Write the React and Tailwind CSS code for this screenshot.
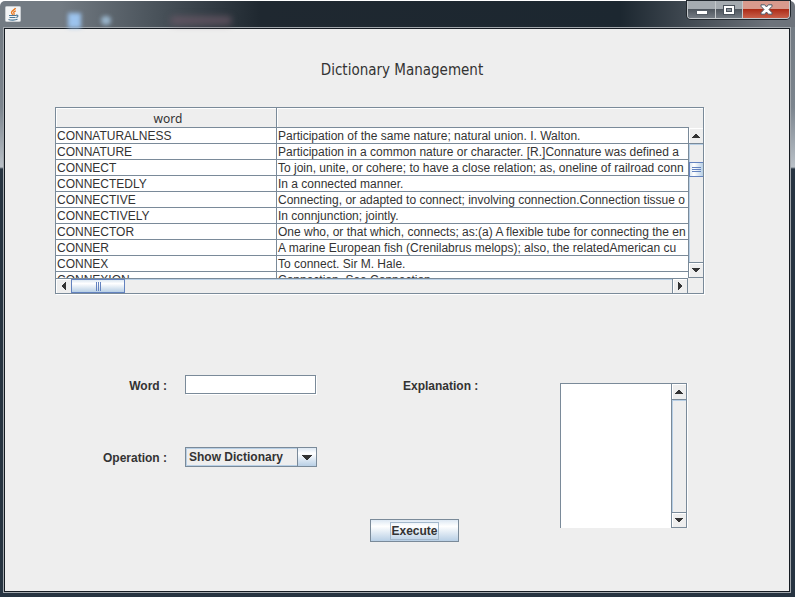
import React from "react";

const rows = [
  ["CONNATURALNESS", "Participation of the same nature; natural union. I. Walton."],
  ["CONNATURE", "Participation in a common nature or character. [R.]Connature was defined a"],
  ["CONNECT", "To join, unite, or cohere; to have a close relation; as, oneline of railroad conn"],
  ["CONNECTEDLY", "In a connected manner."],
  ["CONNECTIVE", "Connecting, or adapted to connect; involving connection.Connection tissue o"],
  ["CONNECTIVELY", "In connjunction; jointly."],
  ["CONNECTOR", "One who, or that which, connects; as:(a) A flexible tube for connecting the en"],
  ["CONNER", "A marine European fish (Crenilabrus melops); also, the relatedAmerican cu"],
  ["CONNEX", "To connect. Sir M. Hale."],
  ["CONNEXION", "Connection. See Connection."],
];

const arrows = {
  up: { w: 8, h: 4, d: "M3 0h2v1h1v1h1v1h1v1H0V3h1V2h1V1h1z" },
  down: { w: 8, h: 4, d: "M0 0h8v1H7v1H6v1H5v1H3V3H2V2H1V1H0z" },
  left: { w: 4, h: 8, d: "M4 0v8H3V7H2V6H1V5H0V3h1V2h1V1h1V0z" },
  right: { w: 4, h: 8, d: "M0 0v8h1V7h1V6h1V5h1V3H3V2H2V1H1V0z" },
};

function Arrow({ dir }) {
  const a = arrows[dir];
  return (
    <svg width={a.w} height={a.h} viewBox={`0 0 ${a.w} ${a.h}`} fill="#333" shapeRendering="crispEdges" aria-hidden="true">
      <path d={a.d} />
    </svg>
  );
}

function ScrollButton({ dir, className }) {
  return (
    <button
      type="button"
      aria-label={`Scroll ${dir}`}
      className={`flex shrink-0 items-center justify-center border-[#7a8a99] bg-[#eee] shadow-[inset_1px_1px_0_#fff] ${className}`}
    >
      <Arrow dir={dir} />
    </button>
  );
}

function JavaIcon() {
  return (
    <svg width="16" height="16" viewBox="0 0 16 16" fill="none" aria-hidden="true">
      <rect x="0.5" y="0.5" width="15" height="15" rx="1" fill="#f3f4f5" stroke="#c9cdd1" />
      <path d="M10.500 2C10 4 6.500 4.500 6.500 6.500c0 1 .8 1.500 1.300 2.300M10.800 4.800C9 5.500 8.200 6.300 9 7.300c.4.500.2 1-.2 1.500" stroke="#e8771f" strokeWidth="1.300" />
      <path d="M4 9.500h7M4.500 11.500h6M3.500 13.500c2 .8 7 .7 9-.2M11 9.300c2.500-.6 2.500 1.700.2 2.200" stroke="#4d7896" strokeWidth="1.200" />
    </svg>
  );
}

function TitleBar() {
  return (
    <header className="relative flex h-[26px] items-start justify-between pr-[5px] pl-[5px]">
      <div className="pt-[5px]">
        <JavaIcon />
      </div>
      <div aria-hidden="true" className="absolute top-[12px] left-[68px] h-[15px] w-[13px] bg-[#9cc3ee] blur-[2px]" />
      <div aria-hidden="true" className="absolute top-[15px] left-[101px] h-[9px] w-[10px] rounded-full bg-[#98b4cb] blur-[2px]" />
      <div aria-hidden="true" className="absolute top-[15px] left-[170px] h-[9px] w-[62px] rounded-full bg-[#6b5867]/70 blur-[3px]" />
      <div className="flex h-[18px] overflow-hidden rounded-b-[4px] border border-t-0 border-[#c4c8cb] shadow-[0_0_0_1px_#20262c]">
        <button type="button" aria-label="Minimize" className="flex w-[28px] items-center justify-center border-r border-[#c4c8cb] bg-linear-to-b from-[#a5abb0] from-45% via-[#50575f] via-50% to-[#747b83]">
          <svg width="12" height="5" viewBox="0 0 12 5" className="mt-[5px]" aria-hidden="true">
            <rect x="0.5" y="0.5" width="11" height="4" fill="#fff" stroke="#555d66" />
          </svg>
        </button>
        <button type="button" aria-label="Maximize" className="flex w-[27px] items-center justify-center border-r border-[#c4c8cb] bg-linear-to-b from-[#a5abb0] from-45% via-[#50575f] via-50% to-[#747b83]">
          <svg width="12" height="10" viewBox="0 0 12 10" fill="none" aria-hidden="true">
            <rect x="0.5" y="0.5" width="11" height="9" fill="#fff" stroke="#4a525b" />
            <rect x="3.5" y="3.5" width="5" height="3" fill="#8b9299" stroke="#4a525b" />
          </svg>
        </button>
        <button type="button" aria-label="Close" className="flex w-[46px] items-center justify-center bg-linear-to-b from-[#d99a8d] from-45% via-[#ad2c17] via-50% to-[#c95f49]">
          <svg width="13" height="11" viewBox="0 0 13 11" aria-hidden="true">
            <path d="M1 .8h3.700L6.500 3 8.300.8H12v1.500L9 5.500l3 3.200v1.500H8.300L6.500 8l-1.800 2.200H1V8.700l3-3.200-3-3.200z" fill="#fff" stroke="#4c5967" />
          </svg>
        </button>
      </div>
    </header>
  );
}

function DictionaryTable() {
  return (
    <section aria-label="Dictionary entries" className="border border-[#7a8a99] shadow-[1px_1px_0_#fff]">
      <div className="flex h-[170px]">
        <div id="entries" className="min-w-0 flex-1 overflow-hidden">
          <table className="w-[1600px] table-fixed border-separate border-spacing-0 text-left">
            <thead>
              <tr className="h-5 font-['Noto_Sans',sans-serif] text-xs">
                <th className="w-[221px] border-r border-b border-[#7a8a99] p-0 pt-[2px] pl-[4px] text-center leading-[17px] font-normal shadow-[inset_1px_1px_0_#fff]">word</th>
                <th aria-label="explanation" className="border-b border-[#7a8a99] p-0 shadow-[inset_1px_1px_0_#fff]" />
              </tr>
            </thead>
            <tbody>
              {rows.map(([word, text]) => (
                <tr key={word} className="h-4 bg-white">
                  <td className="border-r border-b border-[#7a8a99] p-0 pt-px pl-px leading-[14px]">{word}</td>
                  <td className="border-b border-[#7a8a99] p-0 pt-px pl-px leading-[14px] whitespace-nowrap">{text}</td>
                </tr>
              ))}
            </tbody>
          </table>
        </div>
        <div className="flex w-[14px] flex-col pt-5 shadow-[inset_0_1px_0_#fff]">
          <div className="-ml-px flex flex-1 flex-col border-l border-[#7a8a99] bg-[#eee]">
            <ScrollButton dir="up" className="h-4 border-b" />
            <div className="flex-1 pt-[18px] shadow-[inset_1px_1px_0_#b8cfe5]">
              <div role="scrollbar" aria-label="Vertical" aria-orientation="vertical" aria-controls="entries" aria-valuenow={15} className="flex h-[15px] flex-col items-center justify-center gap-px border border-r-0 border-[#6382bf] bg-linear-to-r from-[#dde8f3] via-white via-30% to-[#b8cfe5]">
                <span className="h-px w-[9px] bg-[#6382bf]" />
                <span className="h-px w-[9px] bg-[#6382bf]" />
                <span className="h-px w-[9px] bg-[#6382bf]" />
              </div>
            </div>
            <ScrollButton dir="down" className="h-4 border-y" />
          </div>
        </div>
      </div>
      <div className="flex h-[15px]">
        <div className="flex flex-1 border-t border-[#7a8a99]">
          <ScrollButton dir="left" className="w-[15px]" />
          <div className="flex-1 shadow-[inset_1px_1px_0_#b8cfe5]">
            <div role="scrollbar" aria-label="Horizontal" aria-orientation="horizontal" aria-controls="entries" aria-valuenow={0} className="flex h-full w-[54px] items-center justify-center gap-px border border-[#6382bf] bg-linear-to-b from-[#dde8f3] via-white via-30% to-[#b8cfe5]">
              <span className="h-[9px] w-px bg-[#6382bf]" />
              <span className="h-[9px] w-px bg-[#6382bf]" />
              <span className="h-[9px] w-px bg-[#6382bf]" />
            </div>
          </div>
          <ScrollButton dir="right" className="w-4 border-x" />
        </div>
        <div className="w-[15px]" />
      </div>
    </section>
  );
}

export default function App() {
  return (
    <div className="flex min-h-screen bg-white pt-px pr-[2px] pb-[2px] font-['Liberation_Sans',Arial,sans-serif] text-xs text-[#333]">
      <div className="flex min-w-0 flex-1 flex-col rounded-t-[5px] bg-[linear-gradient(to_right,#737b83_0,#737b83_60px,#4c555d_150px,#1f2830_260px,#1c2730_620px,#6d737b_770px)] bg-[length:100%_26px] bg-no-repeat">
        <TitleBar />
        <div className="flex flex-1 bg-[linear-gradient(to_bottom,#737b83_0,#7c858e_80px,#b9c0c7_140px,#273441_142px)] pr-1 pb-[4px] pl-[3px]">
          <main className="min-w-0 flex-1 border border-[#a3a8ad] bg-[#eee] shadow-[inset_0_0_0_1px_#151b22]">
            <div className="pt-[31px] pr-[86px] pl-[51px]">
              <h1 className="pb-[26px] pl-[45px] text-center font-['DejaVu_Sans_Condensed','Noto_Sans',sans-serif] text-[15px] leading-[22px]">Dictionary Management</h1>
              <DictionaryTable />
            </div>
            <form className="flex items-start pt-[81px] pr-[103px] pl-[99px]" onSubmit={(e) => e.preventDefault()}>
              <div className="grid grid-cols-[64px_132px] gap-x-[18px] gap-y-[50px] font-bold">
                <label htmlFor="word" className="text-right leading-[22px]">Word :</label>
                <input id="word" type="text" className="h-[19px] w-[131px] border border-[#7a8a99] bg-white px-1 font-normal shadow-[1px_1px_0_#fff] outline-none" />
                <label htmlFor="operation" className="text-right leading-[22px]">Operation :</label>
                <div className="grid h-5 grid-cols-[1fr_20px]">
                  <select id="operation" className="col-span-2 col-start-1 row-start-1 h-5 appearance-none border border-[#7a8a99] bg-[#eee] pl-[3px] leading-[16px] font-bold shadow-[inset_0_0_0_1px_#b8cfe5] outline-none">
                    <option>Show Dictionary</option>
                    <option>Add Word</option>
                    <option>Delete Word</option>
                  </select>
                  <span className="pointer-events-none col-start-2 row-start-1 flex items-center justify-center border border-[#7a8a99] bg-linear-to-b from-[#dde8f3] via-white via-30% to-[#b8cfe5]">
                    <svg width="10" height="5" viewBox="0 0 10 5" fill="#333" shapeRendering="crispEdges" aria-hidden="true">
                      <path d="M0 0h10v1H9v1H8v1H7v1H6v1H4V4H3V3H2V2H1V1H0z" />
                    </svg>
                  </span>
                </div>
              </div>
              <div className="flex flex-1 flex-col items-start pl-[53px] font-bold">
                <label htmlFor="explanation" className="pl-[33px] leading-[22px]">Explanation :</label>
                <button type="submit" className="mt-[122px] flex h-[23px] w-[89px] items-center justify-center border border-[#7a8a99] bg-linear-to-b from-[#dde8f3] via-white via-30% to-[#b8cfe5]">
                  <span className="border border-[#a3b8cc] leading-4">Execute</span>
                </button>
              </div>
              <div className="mt-2 flex h-[145px] w-[127px] border border-b-0 border-[#7a8a99] shadow-[1px_0_0_#fff]">
                <textarea id="explanation" className="min-w-0 flex-1 resize-none bg-white outline-none" />
                <div className="flex w-[15px] flex-col border-l border-[#7a8a99]">
                  <ScrollButton dir="up" className="h-4 border-b" />
                  <div className="flex-1 shadow-[inset_1px_1px_0_#b8cfe5]" />
                  <ScrollButton dir="down" className="h-4 border-y" />
                </div>
              </div>
            </form>
          </main>
        </div>
      </div>
    </div>
  );
}
